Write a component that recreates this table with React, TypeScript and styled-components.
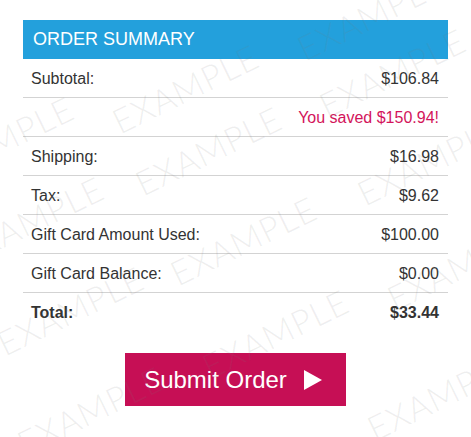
import React from 'react';
import styled, { createGlobalStyle } from 'styled-components';

interface Line {
    label: string,
    value: string,
    kind?: 'saved' | 'total',
}

const lines: Line[] = [
    { label: 'Subtotal:', value: '$106.84' },
    { label: '', value: 'You saved $150.94!', kind: 'saved' },
    { label: 'Shipping:', value: '$16.98' },
    { label: 'Tax:', value: '$9.62' },
    { label: 'Gift Card Amount Used:', value: '$100.00' },
    { label: 'Gift Card Balance:', value: '$0.00' },
    { label: 'Total:', value: '$33.44', kind: 'total' },
];

// watermark centres, read off the screenshot
const marks = [
    [370, 15], [185, 88], [0, 140], [208, 150], [392, 72], [430, 160],
    [30, 220], [243, 240], [460, 265], [70, 310], [275, 333], [90, 410],
    [440, 395],
];

const GlobalStyle = createGlobalStyle`
    body {
        margin: 0;
        background: #fff;
        font-family: "Liberation Sans", Arial, sans-serif;
    }
`;

export default function App() {
    return (
        <Page>
            <GlobalStyle />
            <Summary>
                <Header>ORDER SUMMARY</Header>
                {lines.map((line, i) => (
                    <Row key={i} $total={line.kind === 'total'}>
                        <span>{line.label}</span>
                        <Value $saved={line.kind === 'saved'}>{line.value}</Value>
                    </Row>
                ))}
            </Summary>
            <Actions>
                <SubmitButton type="button">
                    Submit Order
                    <svg width="18" height="20" viewBox="0 0 18 20">
                        <path d="M0 0 L18 10 L0 20 Z" fill="#fff" />
                    </svg>
                </SubmitButton>
            </Actions>
            <Watermarks>
                {marks.map(([x, y], i) => (
                    <Mark key={i} style={{ left: x, top: y }}>EXAMPLE</Mark>
                ))}
            </Watermarks>
        </Page>
    );
}

const Page = styled.div`
    position: relative;
    width: 471px;
    height: 437px;
    overflow: hidden;
    padding: 20px 23px 0;
    box-sizing: border-box;
    color: #333;
`;

const Summary = styled.div`
    display: flex;
    flex-direction: column;
`;

const Header = styled.div`
    height: 39px;
    line-height: 39px;
    padding-left: 10px;
    background: #23a0dc;
    color: #fff;
    font-size: 18px;
`;

const Row = styled.div<{ $total?: boolean }>`
    display: flex;
    justify-content: space-between;
    height: 18px;
    line-height: 18px;
    padding: 11px 9px 9px 8px;
    font-size: 16px;
    font-weight: ${(p) => (p.$total ? 'bold' : 'normal')};
    border-bottom: ${(p) => (p.$total ? 'none' : '1px solid #d3d3d3')};
`;

const Value = styled.span<{ $saved?: boolean }>`
    color: ${(p) => (p.$saved ? '#d3145b' : 'inherit')};
`;

const Actions = styled.div`
    display: flex;
    justify-content: center;
    margin-top: 22px;
`;

const SubmitButton = styled.button`
    display: flex;
    align-items: center;
    gap: 17px;
    height: 53px;
    padding: 0 24px 0 19px;
    border: none;
    background: #c60f55;
    color: #fff;
    font-family: "Liberation Sans", Arial, sans-serif;
    font-size: 24px;
    cursor: pointer;
`;

const Watermarks = styled.div`
    position: absolute;
    inset: 0;
    pointer-events: none;
`;

const Mark = styled.span`
    position: absolute;
    transform: translate(-50%, -50%) rotate(-26deg);
    font-family: Lato, "Liberation Sans", sans-serif;
    font-weight: 300;
    font-size: 34px;
    letter-spacing: 1px;
    color: rgba(120, 120, 120, 0.12);
    white-space: nowrap;
`;
